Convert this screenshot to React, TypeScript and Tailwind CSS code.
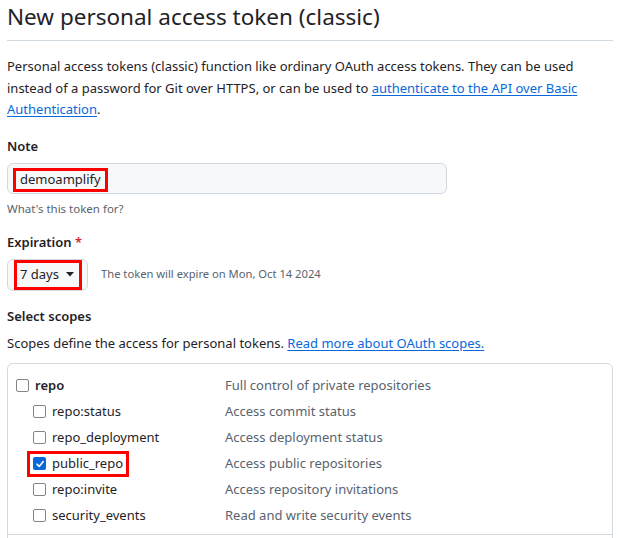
import React from 'react';

type Scope = { name: string; desc: string; checked?: boolean; marked?: boolean; sub?: boolean };

const scopes: Scope[] = [
  { name: 'repo', desc: 'Full control of private repositories' },
  { name: 'repo:status', desc: 'Access commit status', sub: true },
  { name: 'repo_deployment', desc: 'Access deployment status', sub: true },
  { name: 'public_repo', desc: 'Access public repositories', sub: true, checked: true, marked: true },
  { name: 'repo:invite', desc: 'Access repository invitations', sub: true },
  { name: 'security_events', desc: 'Read and write security events', sub: true },
];

const Checkbox: React.FC<{ checked?: boolean }> = ({ checked }) =>
  checked ? (
    <span className="flex h-[13px] w-[13px] shrink-0 items-center justify-center rounded-[2px] bg-[#0969da]">
      <svg width="10" height="10" viewBox="0 0 10 10" fill="none">
        <path d="M2 5.2 L4.2 7.4 L8.2 2.6" stroke="white" strokeWidth="1.6" strokeLinecap="round" strokeLinejoin="round" />
      </svg>
    </span>
  ) : (
    <span className="h-[13px] w-[13px] shrink-0 rounded-[2px] border-[1.5px] border-[#858585] bg-white" />
  );

const ScopeRow: React.FC<{ scope: Scope }> = ({ scope }) => {
  const label = (
    <span className="flex items-center gap-[6px]">
      <Checkbox checked={scope.checked} />
      <span className={scope.sub ? 'text-[#1f2328]' : 'font-semibold text-[#1f2328]'}>{scope.name}</span>
    </span>
  );
  return (
    <div className="flex h-[26px] items-center">
      <div className={scope.sub ? 'w-[209px] pl-[17px]' : 'w-[209px]'}>
        {scope.marked ? (
          <span className="-ml-[6px] inline-flex h-[26px] items-center border-[3px] border-[#ff0000] pl-[3px] pr-[3px]">{label}</span>
        ) : (
          label
        )}
      </div>
      <div className="text-[#59636e]">{scope.desc}</div>
    </div>
  );
};

export default function App() {
  return (
    <div
      className="h-[538px] w-[618px] overflow-hidden bg-white pl-[7px] pr-[5px] text-[13px] text-[#1f2328]"
      style={{ fontFamily: '"Noto Sans", "Open Sans", sans-serif' }}
    >
      <h1 className="border-b border-[#d1d9e0] pb-[8px] pt-[2px] text-[22.5px] leading-[30px] text-[#1f2328]">
        New personal access token (classic)
      </h1>

      <p className="mt-[15px] leading-[21.5px]">
        Personal access tokens (classic) function like ordinary OAuth access tokens. They can be used
        <br />
        instead of a password for Git over HTTPS, or can be used to{' '}
        <a className="text-[#0969da] underline underline-offset-2">authenticate to the API over Basic</a>
        <br />
        <a className="text-[#0969da] underline underline-offset-2">Authentication</a>.
      </p>

      <div className="mt-[15px] font-semibold leading-[21px]">Note</div>
      <div className="mt-[6px] flex h-[31px] w-[440px] items-end rounded-[6px] border border-[#d1d9e0] bg-[#f6f8fa] pl-[5px]">
        <span className="mb-[1px] inline-flex h-[24px] items-center border-[3px] border-[#ff0000] px-[4px] text-[13px]">
          demoamplify
        </span>
      </div>
      <div className="mt-[6px] text-[11.5px] leading-[18px] text-[#59636e]">What's this token for?</div>

      <div className="mt-[14px] font-semibold leading-[21px]">
        Expiration <span className="text-[#d1242f]">*</span>
      </div>
      <div className="mt-[6px] flex items-center">
        <div className="flex h-[32px] w-[81px] items-end rounded-[6px] border border-[#d1d9e0] bg-[#f6f8fa] pl-[6px]">
          <span className="inline-flex h-[30px] w-[68px] items-center gap-[7px] border-[3px] border-[#ff0000] pl-[3px]">
            7 days
            <svg width="8" height="5" viewBox="0 0 8 5">
              <path d="M0 0 H8 L4 4.5 Z" fill="#1f2328" />
            </svg>
          </span>
        </div>
        <span className="ml-[13px] text-[11.2px] text-[#59636e]">The token will expire on Mon, Oct 14 2024</span>
      </div>

      <div className="mt-[15px] font-semibold leading-[21px]">Select scopes</div>
      <div className="mt-[6px] leading-[21px]">
        Scopes define the access for personal tokens.{' '}
        <a className="text-[#0969da] underline underline-offset-2">Read more about OAuth scopes.</a>
      </div>

      <div className="mt-[9px] rounded-t-[6px] border border-[#d1d9e0]">
        <div className="px-[8px] pb-[5px] pt-[9px]">
          {scopes.map((s) => (
            <ScopeRow key={s.name} scope={s} />
          ))}
        </div>
        <div className="h-[20px] border-t border-[#d1d9e0]" />
      </div>
    </div>
  );
}
